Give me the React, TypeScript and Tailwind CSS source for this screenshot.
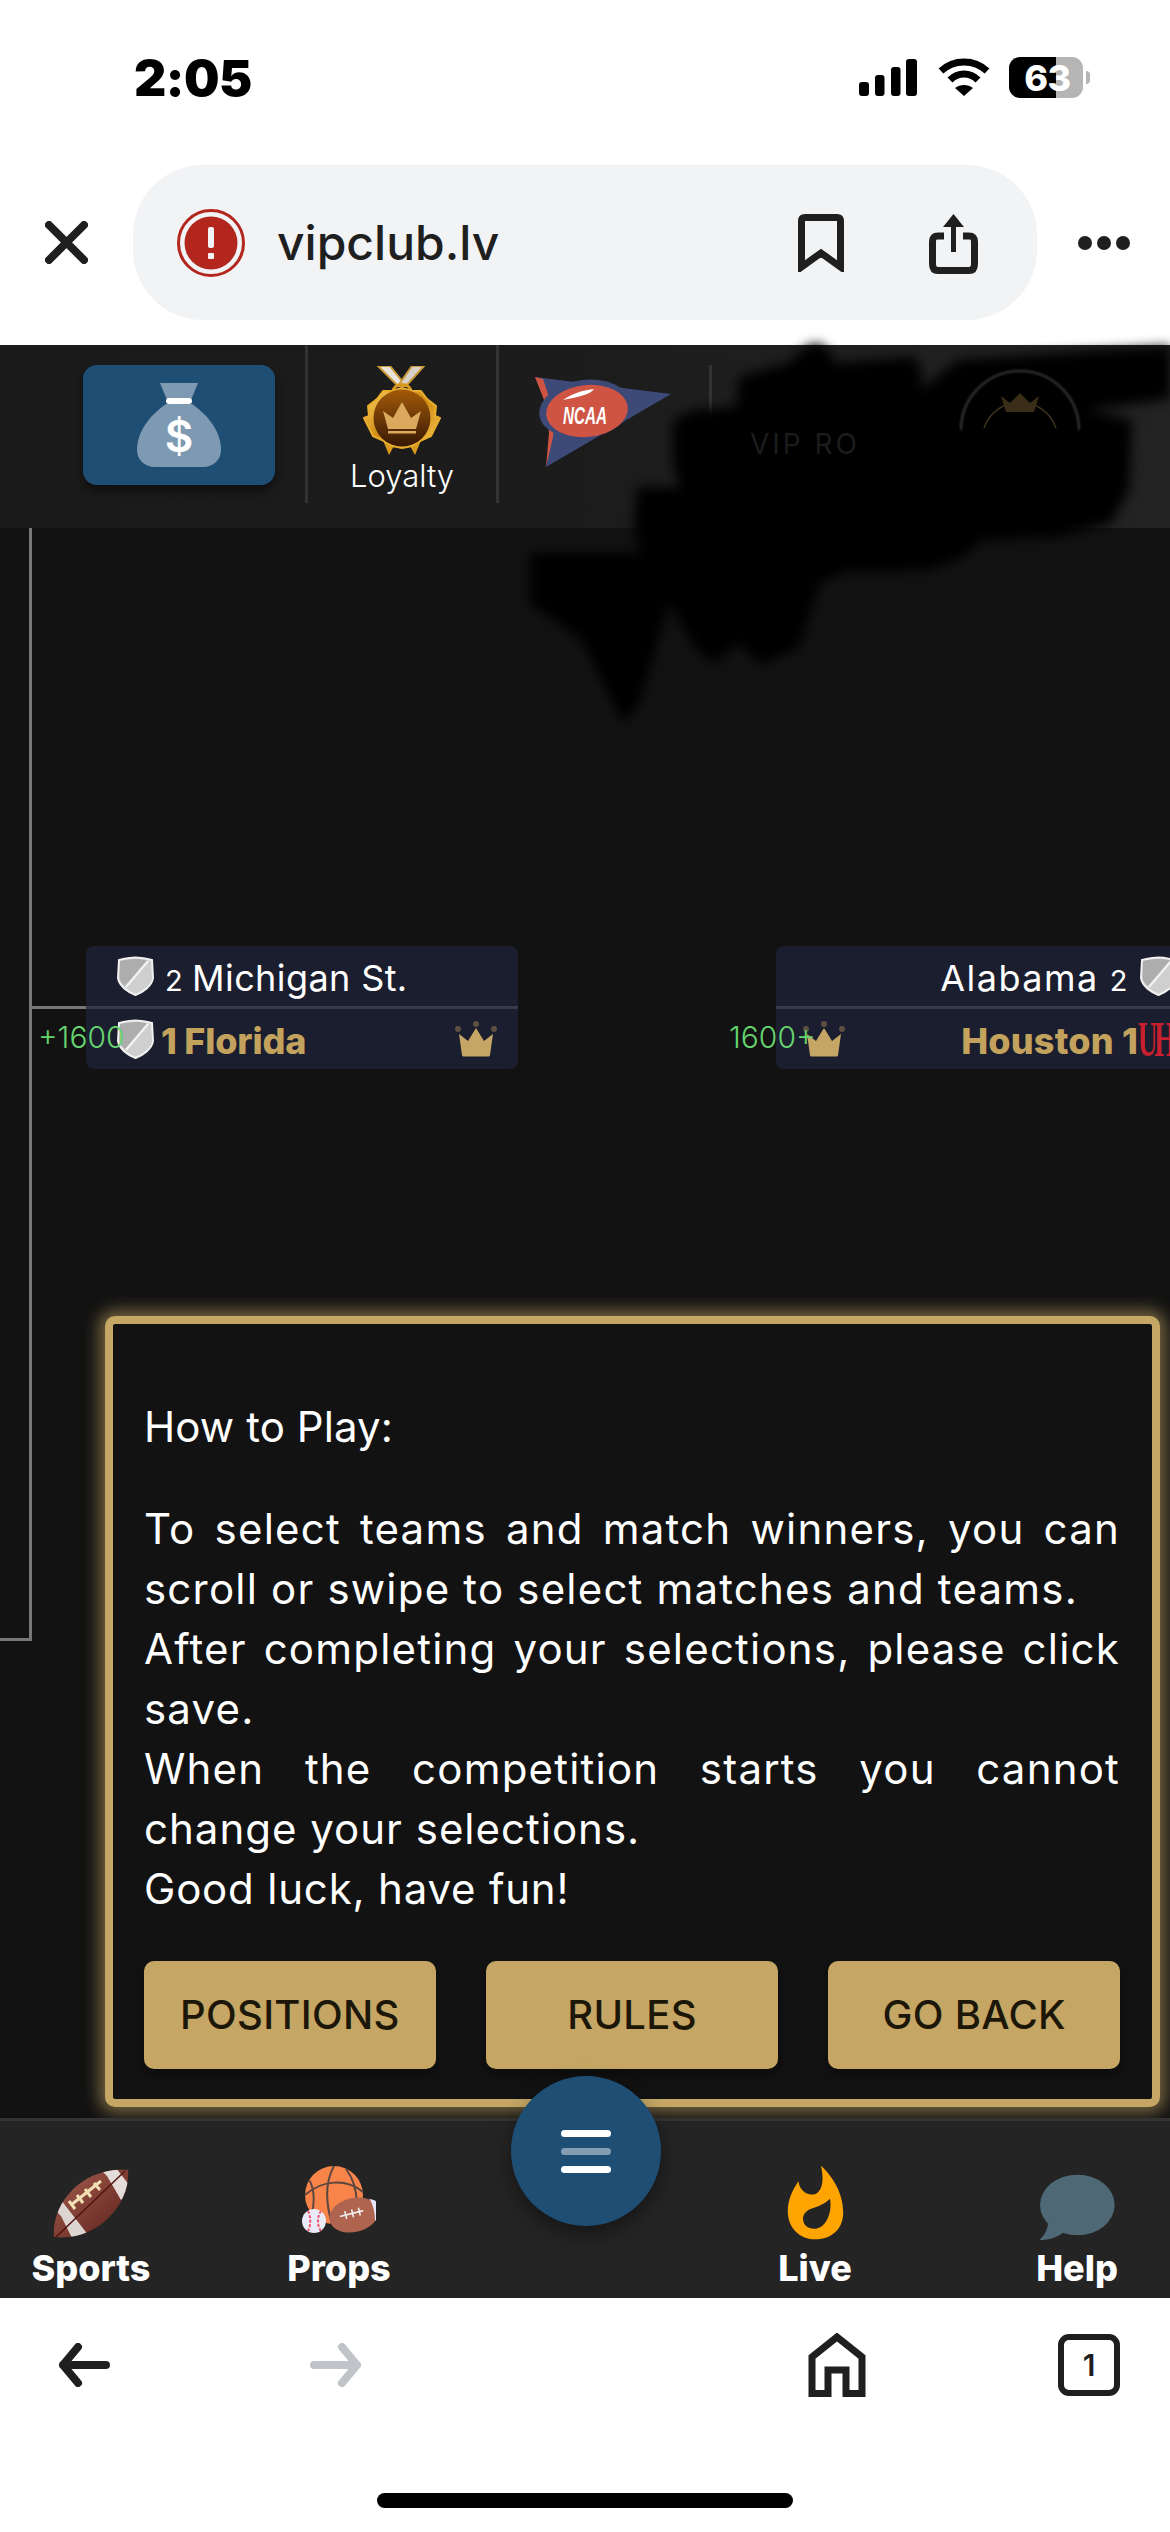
const GOLD = "#c5a664";

function Signal() {
  return (
    <svg width="60" height="40" viewBox="856 58 60 40" fill="#000">
      <rect x="856" y="82" width="10" height="14" rx="3" />
      <rect x="872" y="75" width="9.5" height="21" rx="3" />
      <rect x="888" y="67" width="9.5" height="29" rx="3" />
      <rect x="903" y="59" width="11" height="37" rx="3" />
    </svg>
  );
}

function Wifi() {
  return (
    <svg width="52" height="40" viewBox="0 0 52 40" fill="none" stroke="#000" strokeWidth="7">
      <path d="M3 13C16 1 36 1 49 13" />
      <path d="M12 22C20 14 32 14 40 22" />
      <path d="M26 38L17 30C22 26 30 26 35 30Z" fill="#000" stroke="none" />
    </svg>
  );
}

function Battery() {
  return (
    <div className="flex items-center gap-[3px]">
      <div className="relative w-[74px] h-[41px] rounded-[11px] overflow-hidden flex">
        <div className="w-[47px] bg-black" />
        <div className="flex-1 bg-[#b5b5b5]" />
        <span className="absolute inset-0 flex items-center justify-center text-white text-[36px] font-extrabold leading-none tracking-[-0.5px] pl-[3px]">
          63
        </span>
      </div>
      <div className="w-[4px] h-[13px] rounded-r-full bg-[#b5b5b5]" />
    </div>
  );
}

function CloseIcon() {
  return (
    <svg width="43" height="43" viewBox="0 0 43 43" stroke="#1f1f1f" strokeWidth="8" strokeLinecap="round">
      <path d="M4 4L39 39M39 4L4 39" />
    </svg>
  );
}

function AlertIcon() {
  return (
    <svg width="68" height="68" viewBox="0 0 68 68">
      <circle cx="34" cy="34" r="32.5" fill="none" stroke="#b3261e" strokeWidth="3" />
      <circle cx="34" cy="34" r="26.5" fill="#b3261e" />
      <rect x="31" y="18" width="6" height="21" rx="2" fill="#f4f4f4" />
      <rect x="31" y="44" width="6" height="6" rx="1" fill="#f4f4f4" />
    </svg>
  );
}

function BookmarkIcon() {
  return (
    <svg width="46" height="58" viewBox="0 0 46 58" fill="none" stroke="#1f1f1f" strokeWidth="7">
      <path d="M3.5 53V7C3.5 4 5 3.5 7 3.5H39C41 3.5 42.5 4 42.5 7V53L23 39Z" />
    </svg>
  );
}

function ShareIcon() {
  return (
    <svg width="49" height="62" viewBox="0 0 49 62" fill="none" stroke="#1f1f1f" strokeWidth="7">
      <path d="M15 24H9C5 24 3.5 26 3.5 30V52C3.5 56 5 58.5 9 58.5H40C44 58.5 45.5 56 45.5 52V30C45.5 26 44 24 40 24H34" />
      <path d="M24.5 40V5" strokeWidth="5" />
      <path d="M14 15L24.5 2L35 15Z" fill="#1f1f1f" stroke="none" />
    </svg>
  );
}

function Dots() {
  return (
    <div className="flex gap-[5px]">
      <div className="w-[14px] h-[14px] rounded-full bg-[#1f1f1f]" />
      <div className="w-[14px] h-[14px] rounded-full bg-[#1f1f1f]" />
      <div className="w-[14px] h-[14px] rounded-full bg-[#1f1f1f]" />
    </div>
  );
}

function MoneyBag() {
  return (
    <svg width="84" height="86" viewBox="0 0 84 86">
      <path d="M23 1H61L54 18H30Z" fill="#7e99b2" strokeLinejoin="round" />
      <path d="M29 22H55C72 34 84 50 84 68C84 78 76 85 66 85H18C8 85 0 78 0 68C0 50 12 34 29 22Z" fill="#7e99b2" />
      <rect x="29" y="16" width="26" height="6" rx="3" fill="#fff" />
      <text x="42" y="70" textAnchor="middle" fontSize="44" fontWeight="600" fill="#fff" fontFamily="Inter, sans-serif">
        $
      </text>
    </svg>
  );
}

function Medal() {
  return (
    <svg width="80" height="90" viewBox="0 0 80 90">
      <defs>
        <linearGradient id="medalGold" x1="0" y1="0" x2="1" y2="1">
          <stop offset="0" stopColor="#f8d060" />
          <stop offset="0.5" stopColor="#d08a12" />
          <stop offset="1" stopColor="#f6c850" />
        </linearGradient>
        <linearGradient id="medalCore" x1="0" y1="0" x2="0" y2="1">
          <stop offset="0" stopColor="#a35a0a" />
          <stop offset="1" stopColor="#361802" />
        </linearGradient>
      </defs>
      <path d="M16 0H28L44 20H36Z" fill="#e9e3dc" stroke="#c99a3a" strokeWidth="2" />
      <path d="M62 0H50L36 20H44Z" fill="#d8d0cb" stroke="#c99a3a" strokeWidth="2" />
      <path d="M31 26C31 16 49 16 49 26" fill="none" stroke="#d9991f" strokeWidth="3" />
      <path d="M20 72L27 89L33 78L40 76L47 78L53 89L60 72Z" fill="#d9991f" />
      <path
        d="M40 22L50 25L59 25L65 33L74 40L73 50L78 52L73 62L69 70L60 74L50 80L40 82L30 80L20 74L11 70L7 62L2 52L7 50L6 40L15 33L21 25L30 25Z"
        fill="url(#medalGold)"
        stroke="#e9ad2c"
        strokeWidth="2"
        strokeLinejoin="round"
      />
      <circle cx="40" cy="52" r="28.5" fill="url(#medalCore)" />
      <path d="M21 45L31 52L40 36L49 52L59 45L54 63H26Z" fill="#dba95e" />
      <rect x="26" y="65" width="28" height="2.5" fill="#dba95e" />
    </svg>
  );
}

function NcaaLogo() {
  return (
    <svg width="137" height="92" viewBox="15 11 137 92">
      <path d="M16 12L152 29L27 102L36 50L28 40Z" fill="#3d4a78" />
      <path d="M16 12L24 14L36 50L34 72L27 102L30 68L27 40Z" fill="#cf5443" />
      <ellipse cx="66" cy="44" rx="46" ry="29" transform="rotate(-8 66 44)" fill="#3d4a78" />
      <ellipse cx="68" cy="46" rx="41" ry="26" transform="rotate(-6 68 46)" fill="#cf5443" />
      <path d="M44 35C54 28 65 25 75 24C72 29 60 32 44 35Z" fill="#fff" />
      <text
        x="44"
        y="59"
        fontSize="23"
        fontWeight="700"
        fontStyle="italic"
        fill="#fff"
        fontFamily="'Liberation Sans', sans-serif"
        textLength="44"
        lengthAdjust="spacingAndGlyphs"
      >
        NCAA
      </text>
    </svg>
  );
}

function Scribble() {
  return (
    <svg
      className="absolute left-0 top-0 z-20 blur-[6px] pointer-events-none"
      width="1170"
      height="740"
      viewBox="0 0 1170 740"
    >
      <path
        fill="#000"
        d="M818 343L831 353L834 363L915 357L922 373L922 390L957 360L1185 345L1185 397L1087 410L1132 420L1129 490L1111 523L1059 537L981 540L964 557L929 570L845 572L820 583L799 647L760 665L739 643L715 663L697 650L669 603L638 707L623 723L582 640L530 603L530 553L641 553L634 527L637 487L680 487L673 467L673 420L694 410L736 407L739 377L788 363L806 347Z"
      />
    </svg>
  );
}

function HiddenBalance() {
  return (
    <>
      <span className="absolute z-30 left-[750px] top-[430px] text-[#1c1c1c] text-[28px] leading-none tracking-[3px]">
        VIP RO
      </span>
      <svg className="absolute z-30 left-[955px] top-[360px]" width="130" height="130" viewBox="0 0 130 130" fill="none">
        <path d="M6 70A59 59 0 0 1 124 70" stroke="#3a3a3a" strokeWidth="2" className="blur-[1px]" />
        <path d="M29 68A38 38 0 0 1 101 68" stroke="#3f3320" strokeWidth="1.5" />
        <path d="M46 36L55 43L65 33L75 43L84 36L79 52H51Z" fill="#3a2e18" />
      </svg>
    </>
  );
}

function Shield() {
  return (
    <svg width="37" height="40" viewBox="0 0 37 40" className="shrink-0">
      <path d="M18.5 1.5C25 1.5 30 3 35 4L36 22C35 30 26 36 18.5 39C11 36 2 30 1 22L2 4C7 3 12 1.5 18.5 1.5Z" fill="#cfcfcf" stroke="#f0f0f0" strokeWidth="2" />
      <path d="M3 5C8 4 13 3 18.5 3C23 3 26 3.5 30 4.5L8 30C5 27 3 25 2.5 22Z" fill="#adadad" />
      <path d="M31 5L9 31" stroke="#f4f4f4" strokeWidth="2" />
    </svg>
  );
}

function Crown() {
  return (
    <svg width="42" height="36" viewBox="0 0 42 36" className="shrink-0">
      <circle cx="3" cy="8" r="3" fill="#5c5040" />
      <circle cx="21" cy="3" r="3" fill="#5c5040" />
      <circle cx="39" cy="8" r="3" fill="#5c5040" />
      <path d="M4 13L13 20L21 7L29 20L38 13L35 34C35 35 34 35.5 33 35.5H9C8 35.5 7 35 7 34Z" fill={GOLD} />
    </svg>
  );
}

function Divider() {
  return <div className="h-[3px] bg-[#383a48]" />;
}

function MatchLeft() {
  return (
    <div className="relative ml-[86px] w-[432px] h-[123px] rounded-lg bg-[#1b1e2e] shrink-0">
      <div className="h-[60px] pl-[31px] flex items-center gap-[11px] text-white">
        <Shield />
        <span className="pt-[4px] text-[36px] leading-none tracking-[0.4px] flex items-baseline gap-[9px]">
          <span className="text-[29px]">2</span>Michigan St.
        </span>
      </div>
      <Divider />
      <div className="h-[60px] pl-[31px] pr-[21px] flex items-center">
        <Shield />
        <span className="ml-[7px] pt-[4px] text-[36px] leading-none font-extrabold text-[#c3a25e] tracking-[-0.2px]">
          1 Florida
        </span>
        <span className="ml-auto">
          <Crown />
        </span>
      </div>
      <span className="absolute left-[-48px] top-[76px] text-[#66d46f] text-[30px] font-light leading-none">
        +1600
      </span>
    </div>
  );
}

function MatchRight() {
  return (
    <div className="relative ml-[258px] w-[432px] h-[123px] rounded-lg bg-[#1b1e2e] shrink-0">
      <div className="h-[60px] pr-[31px] flex items-center justify-end gap-[11px] text-white">
        <span className="pt-[4px] text-[36px] leading-none tracking-[1.5px] flex items-baseline gap-[11px]">
          Alabama<span className="text-[29px]">2</span>
        </span>
        <Shield />
      </div>
      <Divider />
      <div className="h-[60px] pl-[27px] flex items-center">
        <Crown />
        <span className="ml-auto pt-[4px] text-[36px] leading-none font-extrabold text-[#c3a25e] tracking-[0.2px]">
          Houston 1
        </span>
        {/* UH logo, squeezed and cut by the page edge */}
        <span className="w-[70px] text-[50px] leading-none font-bold text-[#c8202f] tracking-[-6px] scale-x-[0.55] origin-left whitespace-nowrap [font-family:'Liberation_Serif',serif]">
          UH
        </span>
      </div>
      <span className="absolute left-[-47px] top-[76px] text-[#66d46f] text-[30px] font-light leading-none">
        1600+
      </span>
    </div>
  );
}

function JustifiedLine({ children }: { children: string }) {
  return <span className="block [text-align-last:justify]">{children}</span>;
}

function PanelButton({ label, wide }: { label: string; wide?: boolean }) {
  return (
    <button className={`${wide ? "w-[293px]" : "w-[292px]"} h-[108px] rounded-[10px] bg-[#c5a664] text-[#1c1709] text-[40px] tracking-[0.3px] font-medium shadow-[0_6px_12px_rgba(0,0,0,0.35)]`}>
      {label}
    </button>
  );
}

function HowToPlay() {
  return (
    <div className="ml-[105px] mt-[247px] w-[1055px] h-[791px] rounded-[10px] border-[8px] border-[#c5a664] bg-[#121212] shadow-[0_0_16px_6px_rgba(197,166,100,0.55)] pl-[31px] pr-[32px] pt-[73px] text-white text-[42px] tracking-[1.2px] leading-[60px]">
      <p className="mb-[42px] tracking-[0.1px]">How to Play:</p>
      <p>
        <JustifiedLine>To select teams and match winners, you can</JustifiedLine>
        <span className="block">scroll or swipe to select matches and teams.</span>
        <JustifiedLine>After completing your selections, please click</JustifiedLine>
        <span className="block">save.</span>
        <JustifiedLine>When the competition starts you cannot</JustifiedLine>
        <span className="block tracking-[1px]">change your selections.</span>
        <span className="block tracking-[0.8px]">Good luck, have fun!</span>
      </p>
      <div className="mt-[42px] flex gap-[50px]">
        <PanelButton label="POSITIONS" />
        <PanelButton label="RULES" wide />
        <PanelButton label="GO BACK" />
      </div>
    </div>
  );
}

function Football() {
  return (
    <svg width="76" height="72" viewBox="0 0 76 72">
      <defs>
        <linearGradient id="ballBrown" x1="0" y1="0" x2="1" y2="1">
          <stop offset="0" stopColor="#a85f50" />
          <stop offset="1" stopColor="#5a1f1a" />
        </linearGradient>
        <clipPath id="ballClip">
          <path d="M1 69C-2 35 30 -2 75 2C78 35 45 74 1 69Z" />
        </clipPath>
      </defs>
      <path d="M1 69C-2 35 30 -2 75 2C78 35 45 74 1 69Z" fill="url(#ballBrown)" />
      <g clipPath="url(#ballClip)">
        <path d="M42 -4L60 -4L80 22L68 32L54 8Z" fill="#e3dcd9" />
        <path d="M-4 36L8 32L36 68L22 76L8 48Z" fill="#ddd5d2" />
        <path d="M2 70L72 3" stroke="#4d1512" strokeWidth="1.5" />
      </g>
      <path d="M18 37L48 13" stroke="#f2dfb4" strokeWidth="3" />
      <path d="M16 33L22 41M24 27L30 35M32 21L38 29M41 15L47 22" stroke="#f2dfb4" strokeWidth="3" />
    </svg>
  );
}

function PropsBalls() {
  return (
    <svg width="74" height="74" viewBox="0 0 74 74">
      <circle cx="32" cy="29" r="29" fill="#f8844a" />
      <path d="M10 47C14 30 10 18 7 14M32 0C22 18 24 38 30 58M3 29C20 14 44 12 61 26M44 3C54 16 56 34 54 50" fill="none" stroke="#5a4640" strokeWidth="2" />
      <g transform="rotate(-14 52 49)">
        <ellipse cx="52" cy="49" rx="25" ry="17" fill="#ae644e" />
        <path d="M76 40C78 44 78 52 75 57L71 60C73 52 73 44 71 37Z" fill="#e7e4f5" />
        <path d="M38 47H62M44 43V51M51 43V51M58 43V51" stroke="#eee" strokeWidth="1.6" />
      </g>
      <circle cx="12" cy="55" r="12" fill="#ebebf7" />
      <path d="M6 45C9 50 9 60 6 65M19 45C15 50 15 60 19 65" fill="none" stroke="#f0556e" strokeWidth="2" strokeDasharray="3 1.5" />
    </svg>
  );
}

function Flame() {
  return (
    <svg width="57" height="75" viewBox="258 96 171 226">
      <path
        fillRule="evenodd"
        fill="#ffa400"
        d="M360 98C395 130 427 180 427 240C427 290 390 320 345 320C295 320 260 285 260 235C260 200 275 170 292 145C295 170 315 187 335 185C360 183 372 150 360 98ZM387 198C370 215 350 222 330 228C315 234 306 245 306 258C306 278 322 290 345 288C375 285 395 240 387 198Z"
      />
    </svg>
  );
}

function ChatBubble() {
  return (
    <svg width="76" height="66" viewBox="1020 120 228 198" fill="#4e6975">
      <ellipse cx="1135" cy="213" rx="112" ry="91" />
      <path d="M1047 268C1045 290 1035 305 1022 318C1050 318 1075 310 1092 296Z" />
    </svg>
  );
}

function NavItem({ label, icon, className }: { label: string; icon: React.ReactNode; className: string }) {
  return (
    <div className={`w-[182px] flex flex-col items-center ${className}`}>
      <div className="h-[78px] flex items-end justify-center">{icon}</div>
      <span className="mt-[6px] text-white text-[36px] font-extrabold leading-[44px]">{label}</span>
    </div>
  );
}

function BottomNav() {
  return (
    <nav className="relative z-10 h-[180px] shrink-0 border-t-[3px] border-[#333] bg-[#242424] flex pt-[41px]">
      <NavItem label="Sports" icon={<Football />} className="" />
      <NavItem label="Props" icon={<PropsBalls />} className="ml-[66px]" />
      <NavItem label="Live" icon={<Flame />} className="ml-[294px]" />
      <NavItem label="Help" icon={<ChatBubble />} className="ml-[80px]" />
      {/* menu button */}
      <button className="absolute left-[511px] top-[-45px] w-[150px] h-[150px] rounded-full bg-[#1f4e75] shadow-[0_8px_20px_rgba(0,0,0,0.4)] flex flex-col items-center justify-center gap-[11px]">
        <span className="w-[50px] h-[7px] rounded-full bg-white" />
        <span className="w-[50px] h-[7px] rounded-full bg-white/45" />
        <span className="w-[50px] h-[7px] rounded-full bg-white" />
      </button>
    </nav>
  );
}

function BrowserFooter() {
  return (
    <footer className="flex-1 bg-white flex flex-col">
      <div className="h-[97px] mt-[18px] pl-[58px] flex items-center">
        <svg width="52" height="44" viewBox="0 0 52 44" fill="none" stroke="#1f1f1f" strokeWidth="8" strokeLinecap="round" strokeLinejoin="round">
          <path d="M48 22H5M20 4L5 22L20 40" />
        </svg>
        <svg className="ml-[200px]" width="52" height="44" viewBox="0 0 52 44" fill="none" stroke="#c0c4c9" strokeWidth="8" strokeLinecap="round" strokeLinejoin="round">
          <path d="M4 22H47M32 4L47 22L32 40" />
        </svg>
        <svg className="ml-[446px]" width="58" height="64" viewBox="0 0 58 64" fill="none" stroke="#1f1f1f" strokeWidth="7">
          <path d="M4 60.5V24L29 4L54 24V60.5H38V37H20V60.5Z" />
        </svg>
        <div className="ml-[192px] w-[62px] h-[62px] rounded-[11px] border-[6px] border-[#1f1f1f] flex items-center justify-center text-[30px] font-semibold leading-none text-[#1f1f1f]">
          1
        </div>
      </div>
      <div className="mx-auto mt-[80px] w-[416px] h-[15px] rounded-full bg-black" />
    </footer>
  );
}

export default function App() {
  return (
    <div className="relative w-[1170px] h-[2532px] overflow-hidden flex flex-col bg-white [font-family:Inter,'Liberation_Sans',sans-serif]">
      {/* status bar */}
      <div className="h-[165px] shrink-0 pl-[134px] pr-[80px] pt-[56px] flex items-start justify-between">
        <span className="text-[50px] font-black leading-[44px] tracking-[-0.5px] text-black">2:05</span>
        <div className="flex items-center gap-[19px] mt-[1px]">
          <Signal />
          <Wifi />
          <Battery />
        </div>
      </div>
      {/* address bar */}
      <div className="h-[180px] shrink-0 pl-[45px] pb-[25px] flex items-center">
        <CloseIcon />
        <div className="ml-[45px] w-[904px] h-[155px] rounded-[70px] bg-[#f2f3f5] pl-[44px] flex items-center">
          <AlertIcon />
          <span className="ml-[32px] text-[48px] font-medium leading-none text-[#1f1f1f]">vipclub.lv</span>
          <span className="ml-auto">
            <BookmarkIcon />
          </span>
          <span className="ml-[85px] mr-[59px]">
            <ShareIcon />
          </span>
        </div>
        <div className="ml-[41px]">
          <Dots />
        </div>
      </div>
      {/* site header */}
      <header className="h-[183px] shrink-0 bg-gradient-to-r from-[#1a1a1a] via-[#1c1c1c] to-[#232323] flex items-start">
        <div className="ml-[83px] mt-[20px] w-[192px] h-[120px] rounded-[14px] bg-[#1f4e75] shadow-[0_6px_10px_rgba(0,0,0,0.45)] flex items-center justify-center">
          <MoneyBag />
        </div>
        <div className="ml-[30px] w-[3px] h-[158px] bg-[#333]" />
        <div className="w-[188px] flex flex-col items-center pt-[21px]">
          <Medal />
          <span className="mt-[3px] text-[31px] leading-[34px] font-light text-white">Loyalty</span>
        </div>
        <div className="w-[3px] h-[158px] bg-[#333]" />
        <div className="ml-[35px] mt-[31px]">
          <NcaaLogo />
        </div>
        <div className="ml-[38px] mt-[20px] w-[3px] h-[138px] bg-[#333]" />
      </header>
      {/* bracket */}
      <main className="relative h-[1590px] shrink-0 bg-[#121212]">
        <div className="absolute left-[29px] top-0 w-[3px] h-[1112px] bg-[#777]" />
        <div className="absolute left-0 top-[1110px] w-[32px] h-[3px] bg-[#777]" />
        <div className="absolute left-[30px] top-[478px] w-[56px] h-[3px] bg-[#777]" />
        <div className="flex pt-[418px] relative">
          <MatchLeft />
          <MatchRight />
        </div>
        <div className="relative">
          <HowToPlay />
        </div>
      </main>
      <BottomNav />
      <BrowserFooter />
      <Scribble />
      <HiddenBalance />
    </div>
  );
}
